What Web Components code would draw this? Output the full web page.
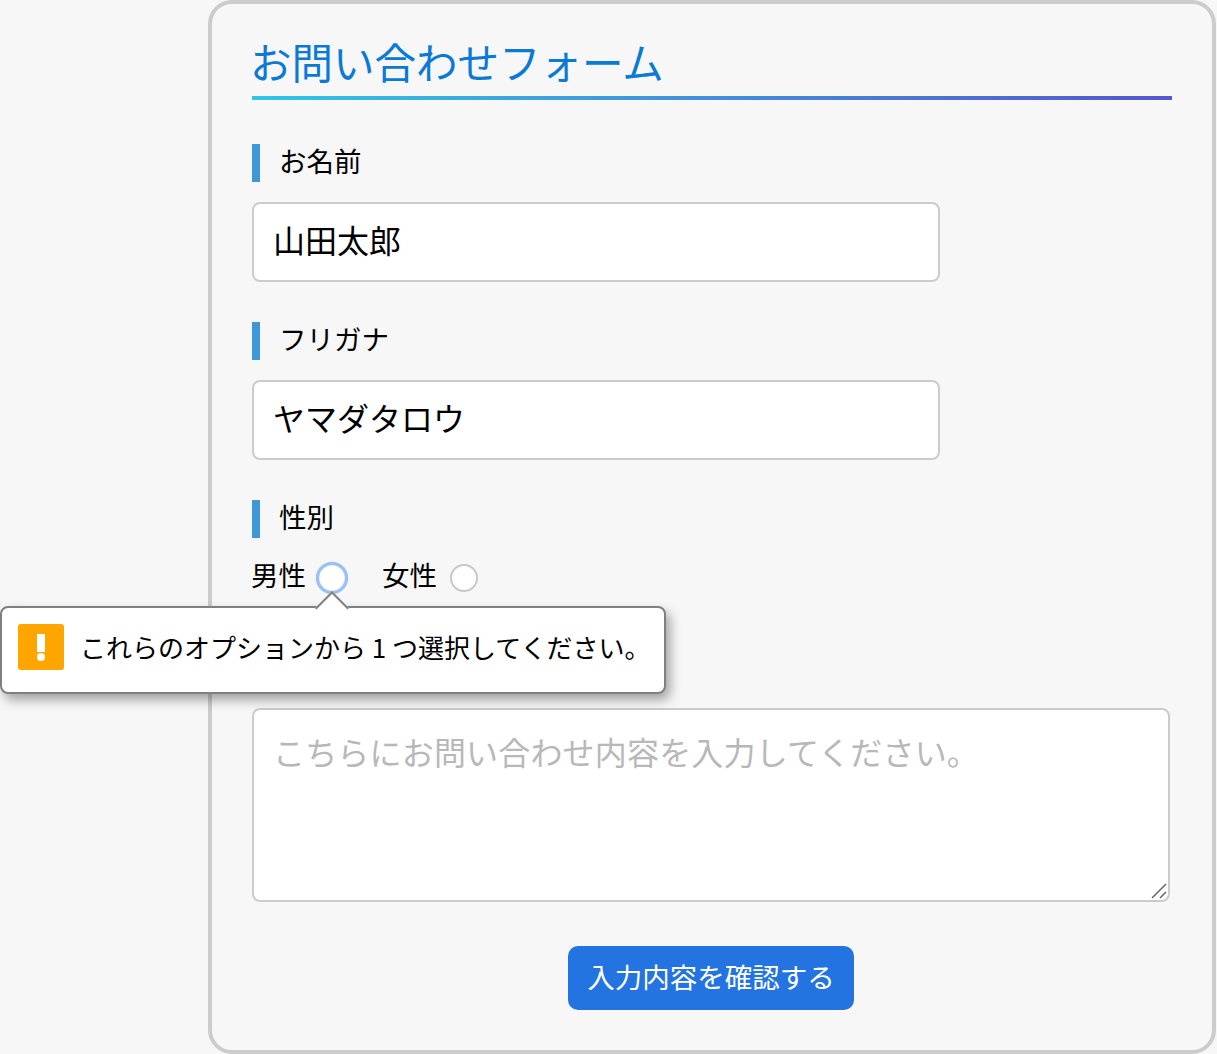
<!DOCTYPE html>
<html lang="ja">
<head>
<meta charset="utf-8">
<title>お問い合わせフォーム</title>
<style>
  html, body { margin: 0; background: #f7f7f7; }
  body { font-family: "Noto Sans CJK JP", "Liberation Sans", sans-serif; color: #000; }
</style>
</head>
<body>
<contact-form>
  <span slot="title">お問い合わせフォーム</span>
  <form-field label="お名前"><text-box>山田太郎</text-box></form-field>
  <form-field label="フリガナ"><text-box>ヤマダタロウ</text-box></form-field>
  <form-field label="性別">
    <radio-group>
      <radio-option focused>男性</radio-option>
      <radio-option>女性</radio-option>
    </radio-group>
  </form-field>
  <form-field><text-area placeholder="こちらにお問い合わせ内容を入力してください。"></text-area></form-field>
  <submit-button>入力内容を確認する</submit-button>
</contact-form>
<validation-bubble>これらのオプションから 1 つ選択してください。</validation-bubble>

<script>
  class ContactForm extends HTMLElement {
    constructor() {
      super();
      this.attachShadow({ mode: "open" });
      this.shadowRoot.innerHTML = `
        <style>
          :host {
            display: block;
            box-sizing: border-box;
            width: 1008px;
            height: 1054px;
            margin-left: 208px;
            padding: 36px 40px 0;
            border: 4px solid #ccc;
            border-radius: 24px;
            background: #f7f7f7;
          }
          h1 {
            margin: 0 0 44px;
            height: 60px;
            box-sizing: border-box;
            padding-bottom: 4px;
            font-size: 41.5px;
            font-weight: 400;
            line-height: 42px;
            color: #0a7ad4;
            background: linear-gradient(90deg, #30c6e6, #5556d0) left bottom / 100% 4px no-repeat;
          }
          h1 span { margin-left: -2px; }
        </style>
        <h1><span><slot name="title"></slot></span></h1>
        <slot></slot>
      `;
    }
  }

  class FormField extends HTMLElement {
    constructor() {
      super();
      this.attachShadow({ mode: "open" });
      this.shadowRoot.innerHTML = `
        <style>
          :host { display: block; margin-bottom: 40px; }
          :host(:nth-of-type(3)) { margin-bottom: 54px; }
          .label {
            height: 38px;
            margin-bottom: 20px;
            padding-left: 19px;
            border-left: 8px solid #3d98d8;
            font-size: 27.5px;
            line-height: 33px;
          }
        </style>
        <div class="label"></div>
        <slot></slot>
      `;
      this.shadowRoot.querySelector(".label").textContent = this.getAttribute("label");
    }
  }

  class TextBox extends HTMLElement {
    constructor() {
      super();
      this.attachShadow({ mode: "open" });
      this.shadowRoot.innerHTML = `
        <style>
          :host {
            display: block;
            box-sizing: border-box;
            width: 688px;
            height: 80px;
            padding: 0 19px;
            border: 2px solid #ccc;
            border-radius: 8px;
            background: #fff;
            font-size: 32px;
            line-height: 71px;
          }
        </style>
        <slot></slot>
      `;
    }
  }

  class TextArea extends HTMLElement {
    constructor() {
      super();
      this.attachShadow({ mode: "open" });
      this.shadowRoot.innerHTML = `
        <style>
          :host {
            display: block;
            position: relative;
            box-sizing: border-box;
            width: 918px;
            height: 194px;
            padding: 20px 19px;
            border: 2px solid #ccc;
            border-radius: 8px;
            background: #fff;
            font-size: 32px;
            letter-spacing: .18px;
            line-height: 43px;
            color: #b8b8b8;
          }
          svg { position: absolute; right: 1px; bottom: 1px; }
        </style>
        <span></span>
        <svg width="16" height="16" viewBox="0 0 16 16">
          <path d="M1 15 15 1M9 15l6-6" stroke="#666" stroke-width="1.5" fill="none"/>
        </svg>
      `;
      this.shadowRoot.querySelector("span").textContent = this.getAttribute("placeholder");
    }
  }

  class RadioGroup extends HTMLElement {
    constructor() {
      super();
      this.attachShadow({ mode: "open" });
      this.shadowRoot.innerHTML = `
        <style>
          :host { display: flex; gap: 34px; height: 40px; margin: -2px 0 0 -1px; align-items: center; }
        </style>
        <slot></slot>
      `;
    }
  }

  class RadioOption extends HTMLElement {
    constructor() {
      super();
      this.attachShadow({ mode: "open" });
      this.shadowRoot.innerHTML = `
        <style>
          :host { display: flex; align-items: center; gap: 13px; font-size: 27.5px; line-height: 36px; }
          span { position: relative; top: -2px; }
          i {
            display: block;
            box-sizing: border-box;
            width: 28px;
            height: 28px;
            margin-top: 4px;
            border: 2px solid #c8c8c8;
            border-radius: 50%;
            background: #fff;
          }
          :host([focused]) { gap: 10px; }
          :host([focused]) i {
            width: 32px;
            height: 32px;
            margin-top: 4px;
            border: 3px solid #98c2f6;
            box-shadow: 0 0 1px #98c2f6, inset 0 0 1px #8fa3bd;
          }
        </style>
        <span><slot></slot></span>
        <i></i>
      `;
    }
  }

  class SubmitButton extends HTMLElement {
    constructor() {
      super();
      this.attachShadow({ mode: "open" });
      this.shadowRoot.innerHTML = `
        <style>
          :host { display: flex; justify-content: center; width: 918px; margin-top: 44px; }
          button {
            width: 286px;
            height: 64px;
            padding: 0 0 4px;
            border: 0;
            border-radius: 10px;
            background: #2373e0;
            color: #fff;
            font: inherit;
            font-size: 27.5px;
          }
        </style>
        <button type="button"><slot></slot></button>
      `;
    }
  }

  // sits over the form, anchored on the focused radio
  class ValidationBubble extends HTMLElement {
    constructor() {
      super();
      this.attachShadow({ mode: "open" });
      this.shadowRoot.innerHTML = `
        <style>
          :host {
            position: absolute;
            left: 0;
            top: 606px;
            box-sizing: border-box;
            width: 666px;
            height: 88px;
            display: flex;
            align-items: flex-start;
            gap: 16px;
            padding: 16px 16px 0;
            border: 2px solid #808080;
            border-radius: 8px;
            background: #fff;
            box-shadow: 4px 6px 12px rgba(0, 0, 0, .35);
            font-size: 26px;
          }
          .arrow {
            position: absolute;
            left: 318px;
            top: -12px;
            width: 22px;
            height: 22px;
            background: #fff;
            border: solid #808080;
            border-width: 2px 0 0 2px;
            transform: rotate(45deg);
          }
          .icon { flex: none; display: block; }
          .text { white-space: nowrap; line-height: 45px; }
        </style>
        <div class="arrow"></div>
        <svg class="icon" width="46" height="46" viewBox="0 0 46 46">
          <rect width="46" height="46" rx="3" fill="#ffa500"/>
          <rect x="19" y="10" width="8" height="18" fill="#fff"/>
          <circle cx="23" cy="33" r="4" fill="#fff"/>
        </svg>
        <span class="text"><slot></slot></span>
      `;
    }
  }

  customElements.define("contact-form", ContactForm);
  customElements.define("form-field", FormField);
  customElements.define("text-box", TextBox);
  customElements.define("text-area", TextArea);
  customElements.define("radio-group", RadioGroup);
  customElements.define("radio-option", RadioOption);
  customElements.define("submit-button", SubmitButton);
  customElements.define("validation-bubble", ValidationBubble);
</script>
</body>
</html>
